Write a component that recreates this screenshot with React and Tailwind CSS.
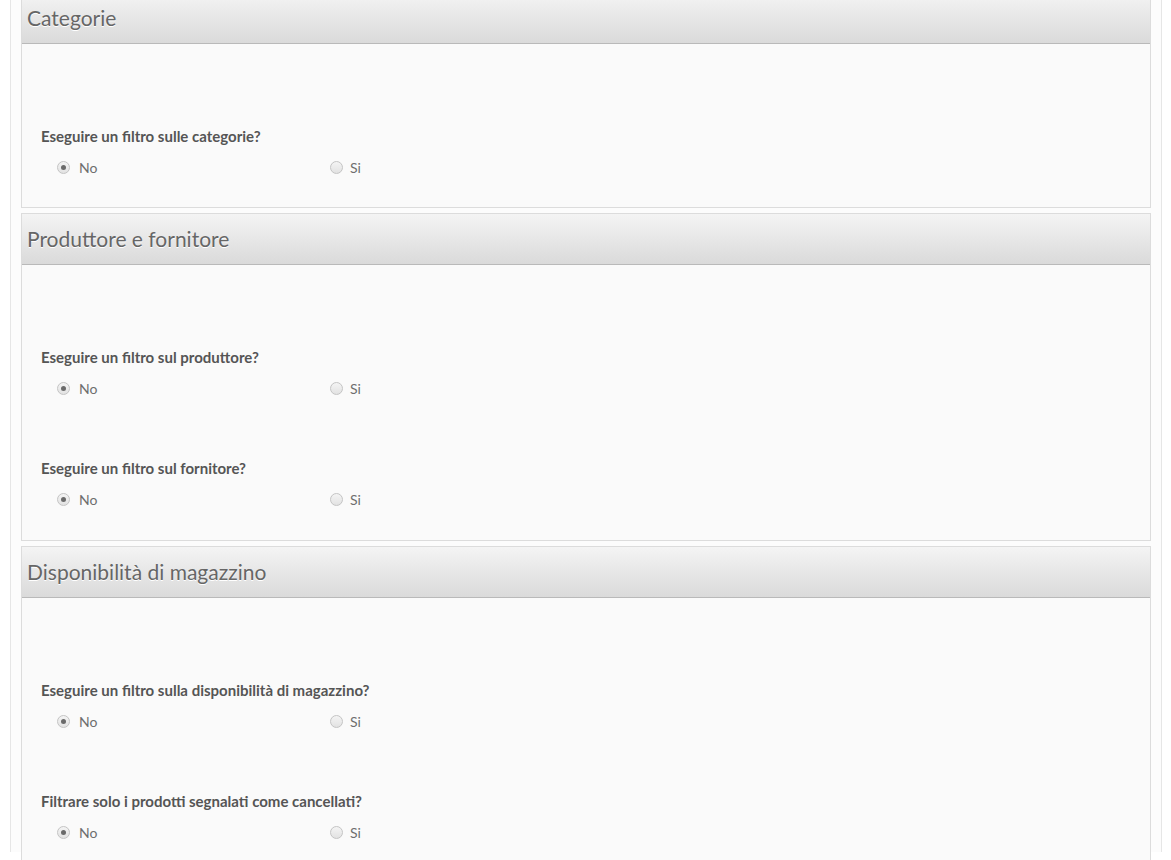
import React from "react";

function Radio({ checked }) {
  return (
    <span className="relative inline-block w-[13px] h-[13px] rounded-full border border-[#c4c4c4] bg-gradient-to-b from-[#f4f4f4] to-[#e2e2e2] shrink-0">
      {checked && (
        <span className="absolute left-[3px] top-[3px] w-[5px] h-[5px] rounded-full bg-[#6a6a6a]" />
      )}
    </span>
  );
}

function Question({ text, first }) {
  return (
    <div className={first ? "" : "mt-[59px]"}>
      <div className="h-[20px] leading-[20px] mb-[10px] text-[15px] font-bold text-[#555]">{text}</div>
      <div className="flex h-[22px] items-center text-[14px] text-[#6e6e6e]">
        <div className="w-[273px] flex items-center pl-[16px] gap-[9px]">
          <Radio checked />
          <span>No</span>
        </div>
        <div className="flex items-center pl-[16px] gap-[7px]">
          <Radio />
          <span>Si</span>
        </div>
      </div>
    </div>
  );
}

function Panel({ title, questions, bottom = "pb-[29px]" }) {
  return (
    <div className="border border-[#dcdcdc] bg-[#fafafa]">
      <div className="h-[51px] flex items-center px-[5px] bg-gradient-to-b from-[#f4f4f4] to-[#dadada] border-b border-[#b9b9b9]">
        <span className="text-[21px] text-[#666] [text-shadow:0_1px_0_#fff]">{title}</span>
      </div>
      <div className={"pl-[19px] pt-[82px] " + bottom}>
        {questions.map((q, i) => (
          <Question key={q} text={q} first={i === 0} />
        ))}
      </div>
    </div>
  );
}

export default function App() {
  return (
    <div className="w-[1171px] h-[860px] overflow-hidden bg-white" style={{ fontFamily: "Lato, 'Open Sans', sans-serif" }}>
      <div className="ml-[10px] w-[1152px] h-full border-l border-r border-[#e6e6e6] bg-[#fcfcfc] px-[10px]">
        <div className="flex flex-col gap-[5px] -mt-[8px]">
          <Panel title="Categorie" questions={["Eseguire un filtro sulle categorie?"]} />
          <Panel
            title="Produttore e fornitore"
            bottom="pb-[30px]"
            questions={["Eseguire un filtro sul produttore?", "Eseguire un filtro sul fornitore?"]}
          />
          <Panel
            title="Disponibilità di magazzino"
            questions={[
              "Eseguire un filtro sulla disponibilità di magazzino?",
              "Filtrare solo i prodotti segnalati come cancellati?",
            ]}
          />
        </div>
      </div>
    </div>
  );
}
